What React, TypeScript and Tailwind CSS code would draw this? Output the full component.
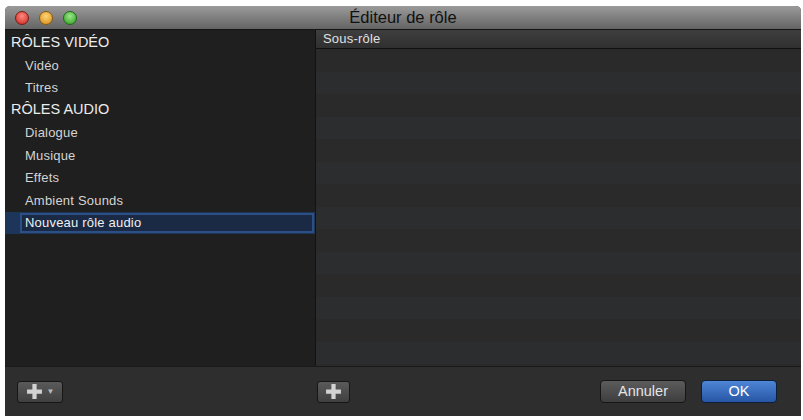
import React from "react";

const videoRoles = ["Vidéo", "Titres"];
const audioRoles = ["Dialogue", "Musique", "Effets", "Ambient Sounds"];

function Plus() {
    return (
        <svg width="17" height="17" viewBox="0 0 16 16">
            <path d="M6 1h4v5h5v4h-5v5H6v-5H1V6h5z" fill="#d2d2d2" />
        </svg>
    );
}

export default function App() {
    return (
        <div className="w-[803px] h-[420px] bg-white pt-[6px] pl-[5px] pr-[2px] pb-[4px] font-['Helvetica','Liberation_Sans',sans-serif]">
            <div className="h-full flex flex-col rounded-t-[5px] overflow-hidden bg-[#2b2b2b]">
                {/* title bar */}
                <div className="relative h-[24px] shrink-0 flex items-center justify-center bg-gradient-to-b from-[#9b9b9b] to-[#646464] border-b border-[#141414]">
                    <div className="absolute left-[10px] top-[5px] flex gap-[10px]">
                        <span className="w-[14px] h-[14px] rounded-full bg-[radial-gradient(circle_at_50%_35%,#ff8a7f,#c8231c)] border border-[#7a1a14]" />
                        <span className="w-[14px] h-[14px] rounded-full bg-[radial-gradient(circle_at_50%_35%,#ffd477,#d48a10)] border border-[#8a5a10]" />
                        <span className="w-[14px] h-[14px] rounded-full bg-[radial-gradient(circle_at_50%_35%,#9ce88a,#2a9a1e)] border border-[#1d6a14]" />
                    </div>
                    <span className="text-[16.5px] text-[#111]">Éditeur de rôle</span>
                </div>

                {/* body */}
                <div className="flex flex-1 min-h-0">
                    <div className="w-[311px] shrink-0 bg-[#1f1f1f] border-r border-[#121212] pt-[2px]">
                        <div className="h-[22px] flex items-center pl-[6px] text-[14.5px] text-[#ececec]">RÔLES VIDÉO</div>
                        {videoRoles.map(r => (
                            <div key={r} className="h-[22.5px] flex items-center pl-[20px] text-[13px] tracking-[0.2px] text-[#d4d4d4]">{r}</div>
                        ))}
                        <div className="h-[22.5px] flex items-center pl-[6px] text-[14.5px] text-[#ececec]">RÔLES AUDIO</div>
                        {audioRoles.map(r => (
                            <div key={r} className="h-[22.5px] flex items-center pl-[20px] text-[13px] tracking-[0.2px] text-[#d4d4d4]">{r}</div>
                        ))}
                        <div className="h-[22px] flex items-center bg-[#1c3558] pl-[15px] pr-[1px]">
                            <div className="flex-1 h-[20px] flex items-center pl-[3px] border-2 border-[#2c4f86] bg-[#1a2a44] text-[13px] tracking-[0.2px] text-[#f0f0f0]">
                                Nouveau rôle audio
                            </div>
                        </div>
                    </div>

                    <div className="flex-1 flex flex-col bg-[#2a2a2a]">
                        <div className="h-[19px] shrink-0 flex items-center pl-[7px] bg-gradient-to-b from-[#3e3e3e] to-[#303030] border-b border-[#111] text-[13px] tracking-[0.2px] text-[#e0e0e0]">
                            Sous-rôle
                        </div>
                        <div className="flex-1 flex flex-col">
                            {Array.from({ length: 14 }).map((_, i) => (
                                <div key={i} className={"h-[22.5px] shrink-0 " + (i % 2 === 0 ? "bg-[#2a2a2a]" : "bg-[#2c2d2f]")} />
                            ))}
                        </div>
                    </div>
                </div>

                {/* bottom bar */}
                <div className="h-[50px] shrink-0 flex items-center bg-[#2e2e2e] border-t border-[#1a1a1a] pl-[12px] pr-[24px]">
                    <button className="w-[46px] h-[22px] flex items-center justify-center gap-[4px] rounded-[3px] border border-[#161616] bg-gradient-to-b from-[#5a5a5a] to-[#404040]">
                        <Plus />
                        <span className="text-[8px] text-[#bbb]">▼</span>
                    </button>
                    <button className="ml-[254px] w-[33px] h-[22px] flex items-center justify-center rounded-[3px] border border-[#161616] bg-gradient-to-b from-[#5a5a5a] to-[#404040]">
                        <Plus />
                    </button>
                    <div className="flex-1" />
                    <button className="w-[86px] h-[23px] rounded-[4px] border border-[#161616] bg-gradient-to-b from-[#5c5c5c] to-[#3e3e3e] text-[14.5px] text-[#e4e4e4]">
                        Annuler
                    </button>
                    <button className="ml-[15px] w-[76px] h-[23px] rounded-[4px] border border-[#0e1f3a] bg-gradient-to-b from-[#4f86d6] to-[#2756a6] text-[14.5px] text-white">
                        OK
                    </button>
                </div>
            </div>
        </div>
    );
}
